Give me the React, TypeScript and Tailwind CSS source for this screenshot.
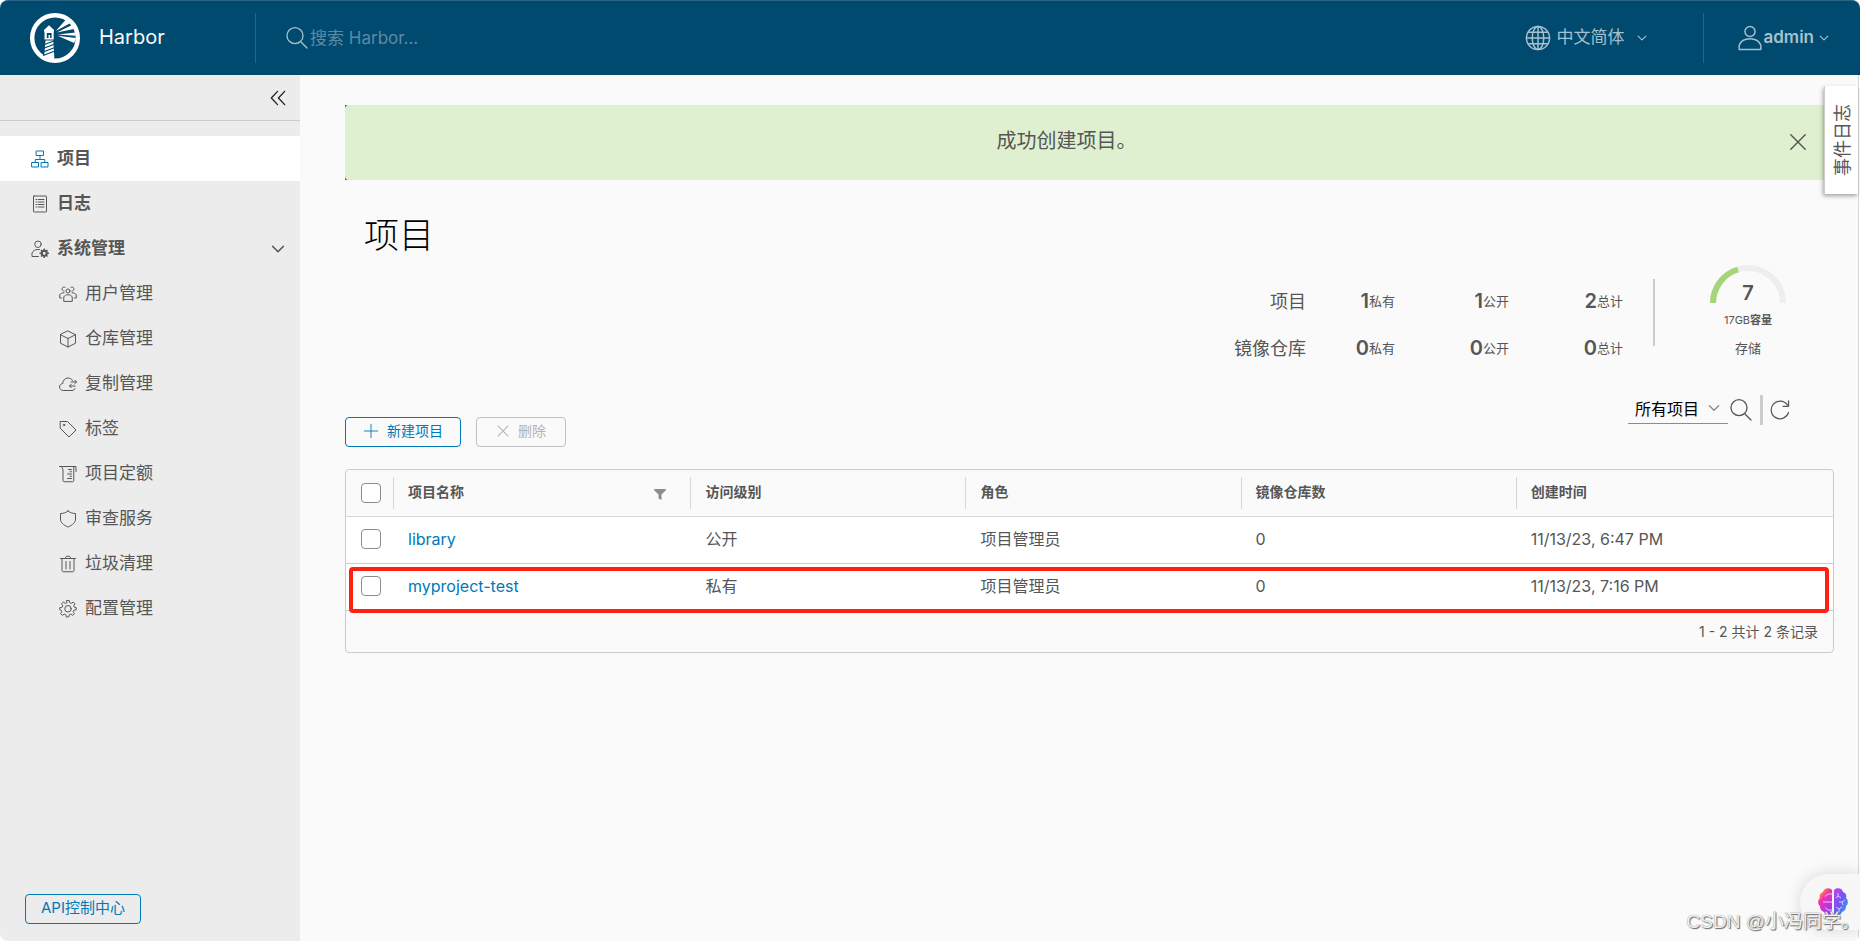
import React, { useState } from 'react';

type IconProps = { className?: string; children?: React.ReactNode };

const Icon: React.FC<IconProps> = ({ className = 'size-5', children }) => (
  <svg viewBox="0 0 36 36" fill="none" stroke="currentColor" strokeWidth="2" strokeLinejoin="round" strokeLinecap="round" className={`shrink-0 ${className}`} aria-hidden="true">
    {children}
  </svg>
);

const SearchIcon: React.FC<IconProps> = ({ className }) => (
  <Icon className={className}>
    <circle cx="15" cy="14.5" r="12" />
    <path d="M24 24l9 9" />
  </Icon>
);

const ChevronDown: React.FC<IconProps> = ({ className }) => (
  <Icon className={className}>
    <path d="M4 11l14 14 14-14" strokeWidth="4" />
  </Icon>
);

const CloseIcon: React.FC<IconProps> = ({ className }) => (
  <Icon className={className}>
    <path d="M5 5l26 26M31 5L5 31" strokeWidth="2.6" />
  </Icon>
);

const GearPath = 'M15.5 2h5l1 4.6 3 1.3 4-2.6 3.4 3.5-2.5 4 1.2 3L34.500 17v4l-4.900 1.200-1.200 3 2.500 4-3.400 3.500-4-2.600-3 1.300-1 4.600h-5l-1-4.600-3-1.300-4 2.600-3.400-3.500 2.500-4-1.200-3L1.500 21v-4l4.900-1.200 1.200-3-2.500-4 3.400-3.500 4 2.600 3-1.300z';

const icons = {
  projects: (
    <>
      <rect x="11" y="2" width="14" height="9" />
      <rect x="2" y="25" width="13" height="9" />
      <rect x="21" y="25" width="13" height="9" />
      <path d="M18 11v6M8.500 25v-6h19v6" />
    </>
  ),
  logs: (
    <>
      <rect x="5" y="2" width="26" height="32" rx="1" />
      <path d="M10 9h2M15 9h11M10 14h2M15 14h11M10 19h2M15 19h11M10 24h2M15 24h11" />
    </>
  ),
  admin: (
    <>
      <circle cx="14" cy="8.500" r="6.500" />
      <path d="M15 33H2v-7c2-4.500 6.500-7 12-7h3" />
      <circle cx="26.500" cy="26.500" r="5" strokeWidth="4" />
      <path d="M26.500 17v4M26.500 32v4M17 26.500h4M32 26.500h4M20 20l3 3M30 30l3 3M33 20l-3 3M23 30l-3 3" strokeWidth="3" strokeLinecap="butt" />
    </>
  ),
  users: (
    <>
      <circle cx="18" cy="12" r="4" />
      <path d="M9.500 32v-8c1.500-3 4.500-4.500 8.500-4.500s7 1.500 8.500 4.500v8z" />
      <path d="M12 4.500a4 4 0 1 0-2 7.500M24 4.500a4 4 0 1 1 2 7.500M10 15.500c-4 0-7 1.500-8.500 4V26H5M26 15.500c4 0 7 1.500 8.500 4V26H31" />
    </>
  ),
  cube: (
    <>
      <path d="M18 2l15 7.500v17L18 34 3 26.500v-17z" />
      <path d="M3 9.500L18 17l15-7.500M18 17v17" />
    </>
  ),
  cloud: (
    <>
      <path d="M32 27c-1 2.500-3 4-6 4H8.500C4.500 31 1 28 1 24s3-6.500 6.500-7c0-6 4.500-11 10.500-11 4 0 7.500 2 9 5" />
      <path d="M24 14h11M31.500 10.500L35 14l-3.500 3.500M32 22H21M24.500 18.500L21 22l3.500 3.500" />
    </>
  ),
  tag: (
    <>
      <path d="M3 3h14l17 17-14 14L3 17z" />
      <circle cx="10" cy="10" r="1.500" />
    </>
  ),
  quota: (
    <>
      <path d="M1 3h33v10M5 3l3 6v22c0 1.500 1 2.500 2.500 2.500H27c1.500 0 2.500-1 2.500-2.500V3" />
      <path d="M19 9h6M22 13.500h3M17 18h8M22 22.500h3M17 27h8" />
    </>
  ),
  shield: <path d="M18 2c4.500 3.500 9 5 15 5v11c0 7-5.500 12-15 16C8.500 30 3 25 3 18V7c6 0 10.500-1.500 15-5z" />,
  trash: (
    <>
      <path d="M3 7h30M6 7v24c0 1.500 1 2.500 2.500 2.500h19c1.500 0 2.500-1 2.500-2.500V7M13 7c0-3 1-4.500 3-4.500h4c2 0 3 1.500 3 4.500M14 13v15M22 13v15" />
    </>
  ),
  cog: (
    <>
      <path d={GearPath} transform="translate(0 -1) scale(1 .97)" />
      <circle cx="18" cy="17.500" r="6.500" />
    </>
  ),
};

const mainItems = [
  { label: '项目', icon: icons.projects, active: true },
  { label: '日志', icon: icons.logs },
  { label: '系统管理', icon: icons.admin, group: true },
];

const adminItems = [
  { label: '用户管理', icon: icons.users },
  { label: '仓库管理', icon: icons.cube },
  { label: '复制管理', icon: icons.cloud },
  { label: '标签', icon: icons.tag },
  { label: '项目定额', icon: icons.quota },
  { label: '审查服务', icon: icons.shield },
  { label: '垃圾清理', icon: icons.trash },
  { label: '配置管理', icon: icons.cog },
];

const stats = [
  { label: '项目', values: [['1', '私有'], ['1', '公开'], ['2', '总计']] },
  { label: '镜像仓库', values: [['0', '私有'], ['0', '公开'], ['0', '总计']] },
];

const projects = [
  { name: 'library', access: '公开', role: '项目管理员', repos: 0, created: '11/13/23, 6:47 PM' },
  { name: 'myproject-test', access: '私有', role: '项目管理员', repos: 0, created: '11/13/23, 7:16 PM', marked: true },
];

const HarborLogo = () => (
  <svg viewBox="0 0 50 50" className="size-[50px] shrink-0" fill="#fff" aria-hidden="true">
    <circle cx="25" cy="25" r="22.800" fill="none" stroke="#fff" strokeWidth="4.400" />
    <path d="M19 12.300l5 4.700v1.500H14V17z" />
    <path d="M14.500 18h9.200v7h-9.200z" />
    <path d="M16.800 20h4.800v5h-1.500v-3h-1.600v3h-1.700z" fill="#004a70" />
    <path d="M14.500 25h9.200v1.500h-9.200zM15.500 27.500h7.800l1 16.500-.3 4-10-3z" />
    <path d="M13 32l11-4M13 35.500l12-4.500M13 39l12-4.500M13 42.500l12-4.500" stroke="#004a70" strokeWidth="1.300" />
    <path d="M25.800 18L35.500 7l4.500 3.200zM26.800 19.500l15.200-7.500 2 4zM27.500 21.500l18-2v3.200zM27.500 22.800L46 25l-1.800 5z" />
  </svg>
);

const Header = () => (
  <header className="flex h-[75px] items-center rounded-t-lg border-t border-[#2a6483] bg-[#004a70] text-[#a6c1cd]">
    <a href="#home" className="flex w-[255px] items-center gap-[19px] pl-[30px] text-xl text-[#fafafa]">
      <HarborLogo />
      <span className="pb-0.5">Harbor</span>
    </a>
    <div className="h-[50px] w-px bg-[#2a6483]" />
    <label className="flex flex-1 items-center pl-[29px]">
      <SearchIcon className="mr-px size-6" />
      <input type="search" placeholder="搜索 Harbor..." aria-label="搜索" className="w-80 bg-transparent text-[17px] leading-6 outline-none placeholder:text-[#5d8ba3]" />
    </label>
    <button className="flex items-center text-[17px] leading-6">
      <Icon className="mr-[5px] size-[26px]">
        <circle cx="18" cy="18" r="16" />
        <ellipse cx="18" cy="18" rx="8" ry="16" />
        <path d="M18 2v32M2 18h32M5 10h26M5 26h26" />
      </Icon>
      <span className="pb-0.5">中文简体</span>
      <ChevronDown className="ml-[13px] size-[10px]" />
    </button>
    <div className="ml-14 h-[50px] w-px bg-[#2a6483]" />
    <button className="mr-[31px] flex items-center pl-[33px] text-[17px] leading-6 font-semibold">
      <Icon className="size-[26px]">
        <circle cx="18" cy="9" r="7" />
        <path d="M3 34v-6c2-5.500 8-9 15-9s13 3.500 15 9v6z" />
      </Icon>
      <span className="pb-0.5">admin</span>
      <ChevronDown className="ml-[5px] size-[10px]" />
    </button>
  </header>
);

const Sidebar: React.FC<{ open: boolean; onToggle: () => void }> = ({ open, onToggle }) => (
  <aside className="flex w-[300px] shrink-0 flex-col bg-[#ececec] text-[17px] leading-6 text-[#565656]">
    <div className="flex h-[46px] items-center justify-end border-b border-[#ccc] pr-[14px]">
      <button aria-label="收起" className="text-[#222]">
        <Icon className="size-4">
          <path d="M17 3L3 18l14 15M33 3L19 18l14 15" strokeWidth="3" />
        </Icon>
      </button>
    </div>
    <nav className="mt-[15px] flex flex-1 flex-col">
      {mainItems.map((item) =>
        item.group ? (
          <button key={item.label} onClick={onToggle} className="flex h-[45px] items-center gap-2 pr-[15px] pl-[31px] text-left font-bold">
            <Icon className="size-[18px]">{item.icon}</Icon>
            <span className="flex-1 pb-0.5">{item.label}</span>
            <ChevronDown className="size-[14px]" />
          </button>
        ) : (
          <a key={item.label} href="#nav" className={`flex h-[45px] items-center gap-2 pl-[31px] font-bold ${item.active ? 'bg-white' : ''}`}>
            <Icon className={item.active ? 'size-[18px] text-[#0079b8]' : 'size-[18px]'}>{item.icon}</Icon>
            <span className="pb-0.5">{item.label}</span>
          </a>
        )
      )}
      {open &&
        adminItems.map((item) => (
          <a key={item.label} href="#admin" className="flex h-[45px] items-center gap-2 pl-[59px]">
            <Icon className="size-[18px]">{item.icon}</Icon>
            <span className="pb-0.5">{item.label}</span>
          </a>
        ))}
    </nav>
    <a href="#api" className="mb-[17px] ml-[25px] flex h-[30px] items-center self-start rounded border border-[#0079b8] px-[15px] pb-0.5 text-[15px] text-[#0079b8]">
      API控制中心
    </a>
  </aside>
);

const Summary = () => (
  <section className="mt-[7px] flex items-start justify-end text-[#565656]">
    <div className="mt-3 mr-[30px] flex flex-col">
      {stats.map((row) => (
        <div key={row.label} className="grid h-[47px] grid-cols-[auto_89px_114px_114px] items-center text-right">
          <span className="pt-0.5 text-lg">{row.label}</span>
          {row.values.map(([n, unit]) => (
            <span key={unit} className="flex items-center justify-end text-[13px] leading-6">
              <b className="text-xl leading-6 font-semibold">{n}</b>
              {unit}
            </span>
          ))}
        </div>
      ))}
    </div>
    <div className="mt-[14px] mr-[7px] h-[67px] w-[2px] bg-[#ccc]" />
    <div className="flex w-[172px] flex-col items-center">
      <div className="relative">
        <svg viewBox="0 0 76 38" className="block h-[38px] w-[76px]" fill="none" strokeWidth="6" aria-hidden="true">
          <path d="M3 38a35 35 0 0 1 70 0" stroke="#eee" />
          <path d="M3 38A35 35 0 0 1 28 4.500" stroke="#a5d479" />
        </svg>
        <b className="absolute inset-x-0 bottom-0 text-center text-xl leading-5 font-semibold">7</b>
      </div>
      <span className="mt-[9px] text-[11px] leading-4">17GB<b>容量</b></span>
      <span className="mt-3 text-[13px] leading-4">存储</span>
    </div>
  </section>
);

const Toolbar = () => (
  <div className="mt-6 flex items-start justify-between">
    <div className="mt-[22px] flex gap-[15px] text-sm">
      <button className="flex h-[30px] items-center gap-2 rounded border border-[#0079b8] px-[17px] pb-0.5 text-[#0079b8]">
        <Icon className="size-4">
          <path d="M18 3v30M3 18h30" />
        </Icon>
        新建项目
      </button>
      <button disabled className="flex h-[30px] items-center gap-2 rounded border border-[#c1c1c1] px-[19px] pb-0.5 text-[#b3b3b3]">
        <CloseIcon className="size-[14px]" />
        删除
      </button>
    </div>
    <div className="mr-[43px] flex h-[30px] items-center text-[#565656]">
      <div className="relative mr-px w-[100px]">
        <select aria-label="项目类型" className="block h-7 w-full appearance-none border-b border-[#8c8c8c] bg-transparent pb-0.5 pl-[7px] text-base text-black outline-none">
          <option>所有项目</option>
        </select>
        <ChevronDown className="pointer-events-none absolute top-[6px] right-2 size-3 text-[#8c8c8c]" />
      </div>
      <button aria-label="搜索项目">
        <SearchIcon className="size-6" />
      </button>
      <div className="mr-[6px] ml-[7px] h-[30px] w-[3px] bg-[#ccc]" />
      <button aria-label="刷新">
        <Icon className="size-[22px]">
          <path d="M32 22a14.500 14.500 0 1 1-2-12.500M32 3v9h-9" />
        </Icon>
      </button>
    </div>
  </div>
);

const HeaderCell: React.FC<{ children: React.ReactNode; className?: string }> = ({ children, className = '' }) => (
  <th scope="col" className={`border-b border-[#d7d7d7] p-0 text-left text-sm font-bold ${className}`}>
    <div className="flex h-8 items-center justify-between border-l border-[#d7d7d7] pr-6 pb-0.5 pl-[14px]">{children}</div>
  </th>
);

const Checkbox: React.FC<{ label: string }> = ({ label }) => (
  <input type="checkbox" aria-label={label} className="ml-[15px] block size-5 appearance-none rounded border border-[#8c8c8c] bg-white checked:bg-[#0079b8]" />
);

const ProjectTable = () => (
  <div className="mt-[22px] rounded border border-[#ccc] text-[#565656]">
    <table className="w-full table-fixed border-separate border-spacing-0">
      <thead>
        <tr className="h-[47px]">
          <th scope="col" className="w-[47px] border-b border-[#d7d7d7] p-0">
            <Checkbox label="选择全部" />
          </th>
          <HeaderCell className="w-1/5">
            项目名称
            <svg viewBox="0 0 12 12" className="mt-1 size-3" fill="#8c8c8c" aria-hidden="true">
              <path d="M0 1h12v1L7.500 6.500V12l-3-1.500v-4L0 2z" />
            </svg>
          </HeaderCell>
          <HeaderCell className="w-[18.5%]">访问级别</HeaderCell>
          <HeaderCell className="w-[18.5%]">角色</HeaderCell>
          <HeaderCell className="w-[18.5%]">镜像仓库数</HeaderCell>
          <HeaderCell>创建时间</HeaderCell>
        </tr>
      </thead>
      <tbody>
        {projects.map((p) => (
          <tr key={p.name} className="relative h-[47px] bg-white text-base *:border-b *:border-[#ccc] *:p-0 *:pb-0.5 *:pl-[15px]">
            <td className="pl-0!">
              <Checkbox label={p.name} />
              {p.marked && <div className="pointer-events-none absolute top-[3px] right-1 -bottom-[2px] left-[3px] rounded-sm border-4 border-[#ff2012]" />}
            </td>
            <td>
              <a href="#project" className="text-[#0079b8]">{p.name}</a>
            </td>
            <td>{p.access}</td>
            <td>{p.role}</td>
            <td>{p.repos}</td>
            <td>{p.created}</td>
          </tr>
        ))}
      </tbody>
    </table>
    <div className="flex h-[41px] items-center justify-end pr-[15px] text-sm">1 - 2 共计 2 条记录</div>
  </div>
);

const BrainIcon = () => (
  <svg viewBox="0 0 30 28" className="size-[30px]" aria-hidden="true">
    <defs>
      <linearGradient id="brainLeft" x1="0" y1="0" x2="0.6" y2="1">
        <stop offset="0.1" stopColor="#f9a825" />
        <stop offset="0.45" stopColor="#ee2fb4" />
        <stop offset="1" stopColor="#9a3cf2" />
      </linearGradient>
      <linearGradient id="brainRight" x1="0" y1="0" x2="1" y2="1">
        <stop offset="0" stopColor="#c53fe8" />
        <stop offset="0.5" stopColor="#6a5af5" />
        <stop offset="1" stopColor="#25b4f8" />
      </linearGradient>
    </defs>
    <path d="M14 2C12-.500 6-.500 5 4 2 5 1 8 2 10c-2.500 2-2.500 6 0 8 0 3 1 5 4 6 1 4 6 5 8 2z" fill="url(#brainLeft)" />
    <path d="M16 2c2-2.500 8-2.500 9 2 3 1 4 4 3 6 2.500 2 2.500 6 0 8 0 3-1 5-4 6-1 4-6 5-8 2z" fill="url(#brainRight)" />
    <path d="M14 6h-4L7 8.500M14 14H5M14 22h-4l-3-2.500M20 5v3l-2 2M20 8l3 2M27 12l-3 2h-3M24 14l1 3M18 19l3 2 3-2M21 21v3" stroke="#fff" strokeWidth="1" fill="none" opacity="0.7" />
  </svg>
);

export default function App() {
  const [adminOpen, setAdminOpen] = useState(true);
  const [showAlert, setShowAlert] = useState(true);

  return (
    <div className="relative flex min-h-screen flex-col overflow-hidden bg-white font-['Inter','Noto_Sans_CJK_SC',sans-serif]">
      <Header />
      <div className="flex flex-1 overflow-hidden rounded-b-lg">
        <Sidebar open={adminOpen} onToggle={() => setAdminOpen(!adminOpen)} />
        <main className="mr-px flex-1 border-r border-[#d7d7d7] bg-[#fafafa] pt-[30px] pr-[24px] pl-[45px]">
          {showAlert && (
            <div role="alert" className="bg-[#0079b8]">
              <div className="flex h-[75px] items-center rounded-sm bg-[#dff0d0] pr-[26px] pb-0.5 text-xl text-[#565656]">
                <p className="flex-1 pb-0.5 text-center">成功创建项目。</p>
                <button aria-label="关闭" onClick={() => setShowAlert(false)}>
                  <CloseIcon className="size-5" />
                </button>
              </div>
            </div>
          )}
          <h1 className="mt-8 pl-[19px] text-[35px] leading-[46px] font-light text-black">项目</h1>
          <Summary />
          <Toolbar />
          <ProjectTable />
        </main>
      </div>

      <button className="absolute top-[86px] right-[2px] flex h-[108px] w-[34px] items-center justify-center border-l border-[#ccc] bg-white pl-0.5 text-lg text-[#565656] shadow-[-1px_2px_4px_rgba(0,0,0,0.35)]">
        <span className="rotate-180 [text-orientation:sideways] [writing-mode:vertical-rl]">事件日志</span>
      </button>

      <button aria-label="助手" className="absolute right-0 bottom-[11px] flex h-14 w-[60px] items-center rounded-l-[28px] bg-[#f7f7f7] pl-[18px] shadow-[0_0_16px_rgba(0,0,0,0.14)]">
        <BrainIcon />
      </button>
      <p className="pointer-events-none absolute right-0 bottom-[5px] font-['Liberation_Sans','Noto_Sans_CJK_SC',sans-serif] text-[19px] leading-7 text-[#f0f0f0] [text-shadow:1px_1px_1px_#666,0_0_1px_#888]">CSDN @小冯同学。</p>
    </div>
  );
}
